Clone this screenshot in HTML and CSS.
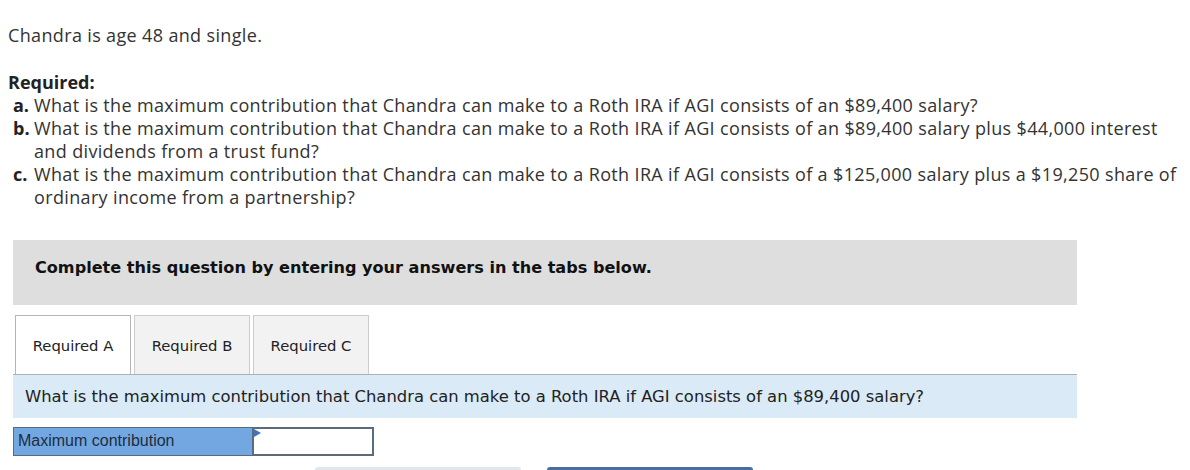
FILE: index.html
```html
<!DOCTYPE html>
<html lang="en">
<head>
  <meta charset="UTF-8">
  <title>Roth IRA question</title>
  <link rel="stylesheet" href="styles.css">
</head>
<body>
  <div class="question">
    <p class="intro">Chandra is age 48 and single.</p>

    <p class="req-title">Required:</p>
    <div class="parts">
      <span class="letter">a.</span>
      <span>What is the maximum contribution that Chandra can make to a Roth IRA if AGI consists of an $89,400 salary?</span>
      <span class="letter">b.</span>
      <span>What is the maximum contribution that Chandra can make to a Roth IRA if AGI consists of an $89,400 salary plus $44,000 interest and dividends from a trust fund?</span>
      <span class="letter">c.</span>
      <span>What is the maximum contribution that Chandra can make to a Roth IRA if AGI consists of a $125,000 salary plus a $19,250 share of ordinary income from a partnership?</span>
    </div>
  </div>

  <div class="notice">Complete this question by entering your answers in the tabs below.</div>

  <div class="tabs">
    <button class="tab active">Required A</button>
    <button class="tab">Required B</button>
    <button class="tab">Required C</button>
  </div>

  <div class="tab-question">What is the maximum contribution that Chandra can make to a Roth IRA if AGI consists of an $89,400 salary?</div>

  <div class="answer-row">
    <div class="answer-label">Maximum contribution</div>
    <div class="answer-cell"><input type="text"></div>
  </div>

  <div class="nav">
    <span class="nav-btn prev"></span>
    <span class="nav-btn next"></span>
  </div>
</body>
</html>
```

FILE: styles.css
```css
body {
  margin: 0;
  background: #ffffff;
  font-family: 'Open Sans', sans-serif;
  color: #333333;
}

.question {
  padding: 23px 8px 0 8px;
  font-size: 18px;
  letter-spacing: 0.35px;
  line-height: 24px;
}

.question p {
  margin: 0;
}

.intro {
  margin-bottom: 23px !important;
}

.req-title {
  font-weight: bold;
  color: #222;
  letter-spacing: 0;
}

.parts {
  display: grid;
  grid-template-columns: 21px 1fr;
  padding-left: 5px;
  line-height: 23px;
}

.letter {
  font-weight: bold;
  color: #222;
  letter-spacing: 0;
}

.notice {
  margin: 31px 0 0 13px;
  width: 1064px;
  height: 65px;
  box-sizing: border-box;
  padding: 18px 22px;
  background: #dedede;
  font-family: 'DejaVu Sans', Verdana, sans-serif;
  font-weight: bold;
  font-size: 16.1px;
  color: #111;
}

.tabs {
  display: flex;
  gap: 3px;
  margin: 10px 0 0 15px;
}

.tab {
  width: 116px;
  height: 59px;
  border: 1px solid #cccccc;
  border-bottom: none;
  background: #f2f2f2;
  font-family: 'DejaVu Sans', Verdana, sans-serif;
  font-size: 14.8px;
  color: #222;
  padding: 0;
}

.tab.active {
  background: #ffffff;
  border-color: #b5b5b5;
}

.tab-question {
  margin-left: 13px;
  width: 1064px;
  height: 44px;
  box-sizing: border-box;
  padding: 12px 12px;
  background: #dbeaf7;
  border-top: 1px solid #a8b3bd;
  font-family: 'DejaVu Sans', Verdana, sans-serif;
  font-size: 16.4px;
  color: #222;
}

.answer-row {
  display: flex;
  margin: 9px 0 0 13px;
}

.answer-label {
  width: 239px;
  height: 29px;
  box-sizing: border-box;
  padding: 4px 4px;
  background: #72a7e2;
  border: 1px solid #5b6b7c;
  border-right: none;
  font-family: 'Liberation Sans', Arial, sans-serif;
  font-size: 16px;
  color: #1f2d3d;
}

.answer-cell {
  position: relative;
  width: 122px;
  height: 29px;
  box-sizing: border-box;
  border: 2px solid #5b6b7c;
  background: #fff;
}

.answer-cell::before {
  content: "";
  position: absolute;
  left: 0;
  top: 0;
  border-left: 7px solid #3f76b8;
  border-top: 4px solid transparent;
  border-bottom: 4px solid transparent;
}

.answer-cell input {
  width: 100%;
  height: 100%;
  border: none;
  outline: none;
  padding: 0 4px;
  box-sizing: border-box;
}

.nav {
  display: flex;
  gap: 26px;
  margin: 11px 0 0 315px;
}

.nav-btn {
  width: 206px;
  height: 4px;
  border-radius: 3px 3px 0 0;
}

.nav-btn.prev {
  background: #e3e7ec;
}

.nav-btn.next {
  background: #466ea3;
}
```
